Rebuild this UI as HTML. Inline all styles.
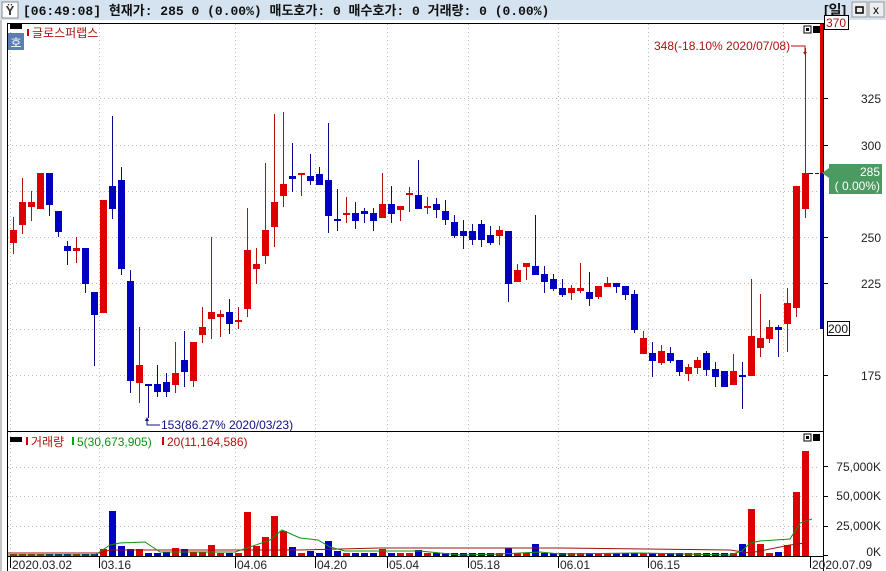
<!DOCTYPE html>
<html><head><meta charset="utf-8"><style>
body{margin:0;width:886px;height:571px;overflow:hidden;background:#fff;font-family:"Liberation Sans","Noto Sans CJK KR",sans-serif;}
svg{display:block}
</style></head><body>
<svg id="s" width="886" height="571" xmlns="http://www.w3.org/2000/svg" font-family="Liberation Sans, Noto Sans CJK KR, sans-serif">
<rect x="0" y="0" width="886" height="20" fill="#d5e3f0"/>
<rect x="2" y="2" width="16" height="16" fill="#fff" stroke="#888"/>
<text x="10" y="15" font-size="13" text-anchor="middle" font-weight="bold" fill="#333">Ÿ</text>
<text x="23" y="15" font-size="13" font-weight="bold" font-family="Liberation Mono, Noto Sans CJK KR, monospace" fill="#111">[06:49:08] 현재가: 285 0 (0.00%) 매도호가: 0 매수호가: 0 거래량: 0 (0.00%)</text>
<text x="824" y="15" font-size="14" font-weight="bold" fill="#111">[일]</text>
<rect x="852" y="2" width="15" height="15" fill="#eee" stroke="#999"/><rect x="856" y="7" width="7" height="6" fill="none" stroke="#000" stroke-width="1.5"/>
<rect x="869" y="2" width="15" height="15" fill="#eee" stroke="#999"/><text x="876" y="14" font-size="12" text-anchor="middle">x</text>
<line x1="1" y1="20" x2="1" y2="571" stroke="#888"/>
<line x1="7.5" y1="23" x2="7.5" y2="571" stroke="#000"/>
<line x1="8" y1="23.5" x2="823" y2="23.5" stroke="#000"/>
<line x1="8" y1="431.5" x2="823" y2="431.5" stroke="#000"/>
<line x1="8" y1="556.5" x2="823" y2="556.5" stroke="#000"/>
<line x1="823.5" y1="23" x2="823.5" y2="571" stroke="#000"/>
<g id="grid" stroke="#bbb" stroke-dasharray="1,3"></g>
<g id="c"></g>
<rect x="10" y="24" width="12" height="5" fill="#000"/>
<rect x="8" y="33" width="16" height="17" fill="#5b7fb0"/>
<text x="16" y="47" font-size="12" fill="#fff" text-anchor="middle">호</text>
<rect x="27" y="29" width="2" height="7" fill="#c00"/>
<text x="32" y="37" font-size="12" fill="#b01010">글로스퍼랩스</text>
<text x="654" y="50" font-size="12" fill="#b01010">348(-18.10% 2020/07/08)</text>
<polyline points="791,46 805,46 805,52" fill="none" stroke="#b01010"/>
<path d="M803,52 L807,52 L805,55 Z" fill="#b01010"/>
<text x="161" y="429" font-size="12" fill="#101080">153(86.27% 2020/03/23)</text>
<polyline points="147,419 147,425 160,425" fill="none" stroke="#101080"/>
<path d="M145,421 L149,421 L147,417 Z" fill="#101080"/>
<rect x="804" y="26" width="7" height="7" fill="#fff" stroke="#000"/><rect x="806" y="28" width="3" height="3" fill="#000"/>
<rect x="813" y="26" width="7" height="7" fill="#000"/>
<rect x="804" y="434" width="7" height="7" fill="#fff" stroke="#000"/><rect x="806" y="436" width="3" height="3" fill="#000"/>
<rect x="813" y="434" width="7" height="7" fill="#000"/>
<rect x="10" y="437" width="12" height="5" fill="#000"/>
<rect x="26" y="437" width="2" height="8" fill="#c00"/>
<text x="31" y="446" font-size="12" fill="#b01010">거래량</text>
<rect x="72" y="437" width="2" height="8" fill="#0a0"/>
<text x="77" y="446" font-size="12" fill="#109010">5(30,673,905)</text>
<rect x="162" y="437" width="2" height="8" fill="#c00"/>
<text x="167" y="446" font-size="12" fill="#b01010">20(11,164,586)</text>
<rect x="820" y="24" width="3" height="150" fill="#d00"/>
<rect x="820" y="173" width="3" height="156" fill="#0000a0"/>
<line x1="809" y1="173.5" x2="819" y2="173.5" stroke="#0000a0" stroke-dasharray="4,2"/>
<g font-size="12" fill="#222" text-anchor="end">
<text x="881" y="103">325</text><text x="881" y="150">300</text><text x="881" y="242">250</text><text x="881" y="288">225</text><text x="881" y="380">175</text>
<text x="881" y="471">75,000K</text><text x="881" y="500">50,000K</text><text x="881" y="530">25,000K</text><text x="881" y="556">0K</text>
</g>
<g stroke="#000"><line x1="823" y1="98.5" x2="828" y2="98.5"/><line x1="823" y1="145.5" x2="828" y2="145.5"/><line x1="823" y1="237.5" x2="828" y2="237.5"/><line x1="823" y1="283.5" x2="828" y2="283.5"/><line x1="823" y1="375.5" x2="828" y2="375.5"/>
<line x1="823" y1="466.5" x2="828" y2="466.5"/><line x1="823" y1="496.5" x2="828" y2="496.5"/><line x1="823" y1="526.5" x2="828" y2="526.5"/><line x1="823" y1="555.5" x2="828" y2="555.5"/></g>
<rect x="824.5" y="15.5" width="24" height="14" fill="#fff" stroke="#000"/>
<text x="836" y="27" font-size="12" fill="#b01010" text-anchor="middle">370</text>
<rect x="827.5" y="321.5" width="22" height="14" fill="#fff" stroke="#000"/>
<text x="838" y="333" font-size="12" fill="#111" text-anchor="middle">200</text>
<rect x="829" y="164" width="53" height="30" fill="#4a9a62"/>
<path d="M822,173 L829,168 L829,178 Z" fill="#4a9a62"/>
<text x="880" y="176" font-size="12" fill="#fff" text-anchor="end">285</text>
<text x="880" y="190" font-size="12" fill="#fff" text-anchor="end">( 0.00%)</text>
<g id="xl" font-size="12" fill="#222"></g>
</svg>
<script>
var NS="http://www.w3.org/2000/svg";
function el(p,t,a,txt){var e=document.createElementNS(NS,t);for(var k in a)e.setAttribute(k,a[k]);if(txt)e.textContent=txt;p.appendChild(e);return e;}
var g=document.getElementById('grid');
[98,145,191,237,283,329,375].forEach(function(y){el(g,'line',{x1:8,y1:y+.5,x2:820,y2:y+.5});});
[467,496,526].forEach(function(y){el(g,'line',{x1:8,y1:y+.5,x2:820,y2:y+.5});});
var vx=[10,99,235,315,387,468,558,648,783];
vx.forEach(function(x){el(g,'line',{x1:x+.5,y1:24,x2:x+.5,y2:556});});
var xl=document.getElementById('xl');
var labs=[[10,'2020.03.02'],[99,'03.16'],[235,'04.06'],[315,'04.20'],[387,'05.04'],[468,'05.18'],[558,'06.01'],[648,'06.15'],[810,'2020.07.09']];
labs.forEach(function(l){el(xl,'line',{x1:l[0]+.5,y1:557,x2:l[0]+.5,y2:568,stroke:'#000'});el(xl,'text',{x:l[0]+2,y:569},l[1]);});
var C=[[217,230,243,254,'r'],[178,202,225,234,'r'],[191,202,207,221,'r'],[173,173,209,209,'r'],[173,173,205,216,'b'],[211,211,232,237,'b'],[241,246,251,265,'b'],[237,248,251,263,'r'],[248,248,284,293,'b'],[292,292,315,366,'b'],
[200,200,313,313,'r'],[116,186,209,219,'b'],[167,180,269,275,'b'],[270,281,381,393,'b'],[327,365,383,403,'r'],[384,384,385,418,'b'],[365,384,392,397,'b'],[373,382,392,397,'b'],[342,373,385,393,'r'],[331,360,372,387,'b'],
[342,342,381,387,'r'],[307,327,335,343,'r'],[237,312,319,339,'r'],[310,314,317,337,'r'],[299,312,324,334,'b'],[307,320,321,329,'r'],[208,250,309,317,'r'],[248,264,269,284,'r'],[163,230,256,264,'r'],[114,202,227,247,'r'],
[112,184,196,207,'r'],[143,176,179,192,'b'],[173,173,175,196,'r'],[154,176,181,185,'b'],[167,174,185,185,'b'],[123,180,216,233,'b'],[189,219,220,231,'b'],[197,213,214,223,'r'],[202,213,221,229,'b'],[208,211,214,223,'b'],
[208,213,221,231,'b'],[173,204,218,218,'r'],[186,204,214,223,'b'],[206,206,210,221,'r'],[187,193,194,212,'r'],[160,195,209,209,'b'],[197,206,207,214,'r'],[198,204,210,218,'b'],[200,211,220,225,'b'],[215,222,236,238,'b'],
[220,231,236,249,'b'],[224,231,240,245,'b'],[220,224,240,247,'b'],[226,235,243,245,'b'],[226,230,236,245,'r'],[231,231,284,302,'b'],[264,270,282,282,'r'],[263,263,267,280,'r'],[215,266,275,275,'b'],[266,274,282,293,'b'],
[274,279,289,291,'b'],[279,288,295,297,'b'],[285,288,293,300,'r'],[263,288,291,293,'r'],[272,292,299,306,'b'],[286,286,297,299,'r'],[277,283,287,287,'r'],[283,283,287,293,'b'],[286,286,295,300,'b'],[290,294,330,333,'b'],
[331,338,354,354,'r'],[342,353,361,377,'b'],[345,351,363,365,'r'],[347,353,361,363,'b'],[360,360,372,376,'b'],[364,367,374,381,'r'],[357,360,368,374,'r'],[351,353,370,376,'b'],[362,369,377,387,'b'],[371,371,387,387,'b'],
[354,371,385,385,'r'],[362,375,376,409,'b'],[279,336,376,376,'r'],[294,338,348,357,'r'],[320,327,339,343,'r'],[325,327,330,357,'b'],[288,303,324,352,'r'],[186,186,308,317,'r'],[48,173,209,218,'r']];
var V={102:[549,'r'],111:[511,'b'],120:[546,'b'],129:[549,'b'],138:[549,'r'],147:[553,'b'],156:[553,'b'],165:[552,'b'],174:[548,'r'],183:[549,'b'],192:[552,'r'],201:[552,'r'],210:[545,'r'],219:[553,'r'],228:[553,'b'],237:[553,'r'],246:[512,'r'],255:[546,'r'],264:[537,'r'],273:[516,'r'],282:[531,'r'],291:[547,'b'],300:[553,'r'],309:[551,'b'],318:[553,'b'],327:[541,'b'],336:[551,'b'],345:[553,'r'],381:[549,'r'],417:[550,'b'],507:[548,'b'],534:[544,'b'],630:[550,'b'],741:[544,'b'],750:[509,'r'],759:[544,'r'],768:[553,'r'],777:[552,'b'],786:[545,'r'],795:[492,'r'],804:[451,'r']};
var c=document.getElementById('c');
C.forEach(function(d,i){var x=13+9*i;var col=d[4]=='r'?'#dd0000':'#0000c0';var wc=d[4]=='r'?'#b01010':'#0a0a90';
el(c,'line',{x1:x+.5,y1:d[0],x2:x+.5,y2:d[3],stroke:wc});
var h=Math.max(2,d[2]-d[1]);el(c,'rect',{x:x-3,y:d[1],width:7,height:h,fill:col});
var v=V[x]||V[x-1]||V[x+1]||V[x-2]||V[x+2];var top=v?v[0]:(i<10?554:553);var vc=v?(v[1]=='r'?'#dd0000':'#0000c0'):col;
el(c,'rect',{x:x-3,y:top,width:7,height:556-top,fill:vc});});
el(c,'polyline',{points:'8,553 100,553 110,550 300,550 380,548 560,548 730,550 750,553 790,545 805,543',fill:'none',stroke:'#a01010'});
el(c,'polyline',{points:'8,555 95,555 110,545 120,543 145,542 160,552 235,552 250,547 270,540 282,530 300,538 318,540 330,547 345,551 420,551 460,555 500,554 540,552 560,554 640,553 730,555 742,551 750,543 760,541 790,539 800,523 812,519',fill:'none',stroke:'#109010'});
</script>
</body></html>
